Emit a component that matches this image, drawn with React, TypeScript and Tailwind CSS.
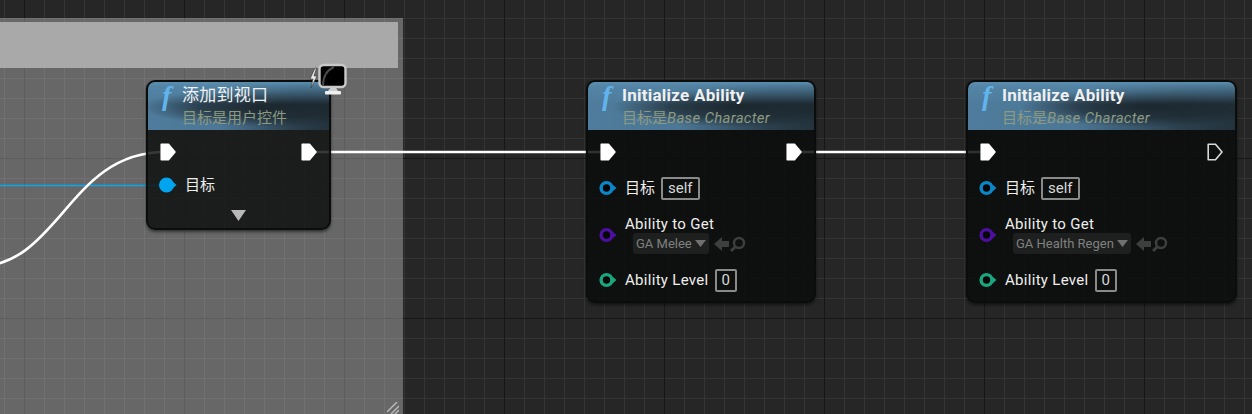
import React from 'react';

const FONT = '[font-family:Roboto,"Noto_Sans_CJK_SC",sans-serif]';

const ExecPin = ({ filled = true }: { filled?: boolean }) => (
  <svg width="16" height="18" viewBox="0 0 16 18" className="block shrink-0">
    <path
      d="M1.2 1.2 H8.5 L15 9 L8.5 16.8 H1.2 Z"
      fill={filled ? '#ffffff' : 'none'}
      stroke={filled ? '#ffffff' : '#d8d8d8'}
      strokeWidth={filled ? 1.5 : 1.6}
      strokeLinejoin="round"
    />
  </svg>
);

const DataPin = ({ color, filled = false }: { color: string; filled?: boolean }) => (
  <svg width="18" height="16" viewBox="0 0 18 16" className="block shrink-0">
    <circle cx="7.5" cy="8" r={filled ? 7.5 : 5.4} fill={filled ? color : '#050707'} stroke={color} strokeWidth={filled ? 0 : 3.4} />
    <path d="M14 5 L17.5 8 L14 11 Z" fill={color} />
  </svg>
);

const FunctionHeader = ({ title, subtitle, bold }: { title: string; subtitle: React.ReactNode; bold?: boolean }) => (
  <div className="flex h-[48px] rounded-t-[7px] bg-[linear-gradient(180deg,#5b8eb0_0px,rgba(85,135,168,0.75)_5px,rgba(85,135,168,0)_22px),radial-gradient(ellipse_130px_20px_at_68%_52%,#1c272e_0%,rgba(28,39,46,0.7)_55%,rgba(28,39,46,0)_100%),linear-gradient(90deg,#4f7c9c_0%,#4c7796_40%,#2b3f4c_80%,#24333d_100%)]">
    <span className="ml-[14px] mt-[-1px] w-[20px] text-[28px] leading-[30px] font-bold italic text-[#62b4ee] [font-family:'Liberation_Serif',serif]">f</span>
    <div>
      <div className={`mt-[2px] text-[17px] leading-[22px] tracking-[0.25px] text-[#f0f0f0] ${bold ? 'font-bold' : ''}`}>{title}</div>
      <div className="mt-[2px] text-[15px] leading-[20px] text-[#8d9a80]">{subtitle}</div>
    </div>
  </div>
);

const ValueBox = ({ children }: { children: React.ReactNode }) => (
  <span className="ml-[6px] inline-flex h-[23px] items-center rounded-[2px] border-2 border-[#8a8a8a] px-[5px] text-[15px] leading-none text-[#d8d8d8]">
    {children}
  </span>
);

const InitializeNode = ({ left, width, ability, lastFilled }: { left: string; width: string; ability: string; lastFilled: boolean }) => (
  <div className={`absolute top-[80px] h-[223px] ${left} ${width} rounded-[9px] border-2 border-[#0b0c0c] bg-[rgba(11,13,12,0.85)] shadow-[0_2px_3px_rgba(0,0,0,0.5)]`}>
    <FunctionHeader
      bold
      title="Initialize Ability"
      subtitle={<>目标是<span className="italic tracking-[0.3px]">Base Character</span></>}
    />
    <div className="flex justify-between px-[12px] pt-[13px]">
      <ExecPin />
      <ExecPin filled={lastFilled} />
    </div>
    <div className="mt-[14px] flex h-[26px] items-center pl-[11px]">
      <DataPin color="#0a87c9" />
      <span className="ml-[8px] text-[15px] text-[#eeeeee]">目标</span>
      <ValueBox>self</ValueBox>
    </div>
    <div className="mt-[14px] flex items-center pl-[11px]">
      <DataPin color="#4d0fa0" />
      <div className="ml-[8px]">
        <div className="text-[15px] leading-[18px] tracking-[0.3px] text-[#eeeeee]">Ability to Get</div>
        <div className="flex items-center pl-[8px]">
          <span className="flex h-[21px] items-center gap-[3px] rounded-[3px] bg-[#1e201f] px-[3px] text-[13px] text-[#7f807f]">
            {ability}
            <svg width="11" height="7" viewBox="0 0 11 7"><path d="M0 0 H11 L5.5 7 Z" fill="#6f706f" /></svg>
          </span>
          <svg width="40" height="18" viewBox="0 0 40 18" className="ml-[5px]">
            <path d="M0 9 L8 2 V6 H15 V12 H8 V16 Z" fill="#3d3f3e" />
            <circle cx="25" cy="8" r="5" fill="none" stroke="#3d3f3e" strokeWidth="2.5" />
            <path d="M21 12 L17 16" stroke="#3d3f3e" strokeWidth="3" />
          </svg>
        </div>
      </div>
    </div>
    <div className="mt-[13px] flex h-[26px] items-center pl-[11px]">
      <DataPin color="#1aa67e" />
      <span className="ml-[8px] text-[15px] tracking-[0.3px] text-[#eeeeee]">Ability Level</span>
      <ValueBox>0</ValueBox>
    </div>
  </div>
);

const MonitorBadge = () => (
  <svg width="40" height="36" viewBox="0 0 40 36" className="absolute left-[160px] top-[-20px]">
    <path d="M7 6 L2 17 H5 L3 26 L9 14 H6 L8.5 6 Z" fill="#e8e8e8" stroke="#333" strokeWidth="0.6" />
    <rect x="11.5" y="3" width="26" height="22" rx="4" fill="#000" stroke="#c9c9c9" strokeWidth="2.4" />
    <path d="M15 24 C15 14 19 8 26 5" fill="none" stroke="#4a4a4a" strokeWidth="2" />
    <path d="M20 29 L22 26 H28 L30 29 Z" fill="#cfcfcf" />
    <rect x="17" y="29" width="16" height="3.5" rx="1" fill="#f0f0f0" />
  </svg>
);

export default function App() {
  return (
    <div className={`relative h-[414px] w-[1252px] overflow-hidden bg-[#262626] ${FONT}`}>
      {/* graph grid */}
      <div className="absolute inset-0 bg-[linear-gradient(90deg,#171717_1px,transparent_1px),linear-gradient(180deg,#171717_1px,transparent_1px),linear-gradient(90deg,#343434_1px,transparent_1px),linear-gradient(180deg,#343434_1px,transparent_1px)] bg-[size:160px_160px,160px_160px,20px_20px,20px_20px] bg-[position:24px_-2px,24px_-2px,4px_-2px,4px_-2px]" />

      {/* comment box */}
      <div className="absolute left-0 top-[18px] h-[396px] w-[403px] bg-[rgba(255,255,255,0.3)] pr-[5px] pt-[4px]">
        <div className="h-[46px] bg-[#a9a9a9]" />
        <svg width="12" height="12" viewBox="0 0 12 12" className="absolute bottom-0 right-[4px]">
          <path d="M0 10 L10 0 M4 12 L12 4 M8 12 L12 8" stroke="#b8b8b8" strokeWidth="1.5" />
        </svg>
      </div>

      {/* wires */}
      <svg width="1252" height="414" viewBox="0 0 1252 414" className="absolute left-0 top-0">
        <path d="M0 185.5 H168" stroke="#0ba5f0" strokeWidth="1.3" fill="none" />
        <path d="M-25 267 C60 267 68 152 165 152" stroke="#ffffff" strokeWidth="2.6" fill="none" />
        <path d="M310 152 H607" stroke="#ffffff" strokeWidth="2.6" fill="none" />
        <path d="M794 152 H987" stroke="#ffffff" strokeWidth="2.6" fill="none" />
      </svg>

      {/* add to viewport node */}
      <div className="absolute left-[146px] top-[80px] h-[150px] w-[185px] rounded-[9px] border-2 border-[#0b0c0c] bg-[rgba(11,13,12,0.82)] shadow-[0_2px_3px_rgba(0,0,0,0.5)]">
        <FunctionHeader title="添加到视口" subtitle="目标是用户控件" />
        <MonitorBadge />
        <div className="flex justify-between px-[12px] pt-[13px]">
          <ExecPin />
          <ExecPin />
        </div>
        <div className="mt-[14px] flex h-[20px] items-center pl-[11px]">
          <DataPin color="#00a4ef" filled />
          <span className="ml-[8px] text-[15px] text-[#eeeeee]">目标</span>
        </div>
        <svg width="15" height="11" viewBox="0 0 15 11" className="mx-auto mt-[15px] block">
          <path d="M0 0 H15 L7.5 11 Z" fill="#b9b9b9" />
        </svg>
      </div>

      <InitializeNode left="left-[586px]" width="w-[230px]" ability="GA Melee" lastFilled />
      <InitializeNode left="left-[966px]" width="w-[271px]" ability="GA Health Regen" lastFilled={false} />
    </div>
  );
}
